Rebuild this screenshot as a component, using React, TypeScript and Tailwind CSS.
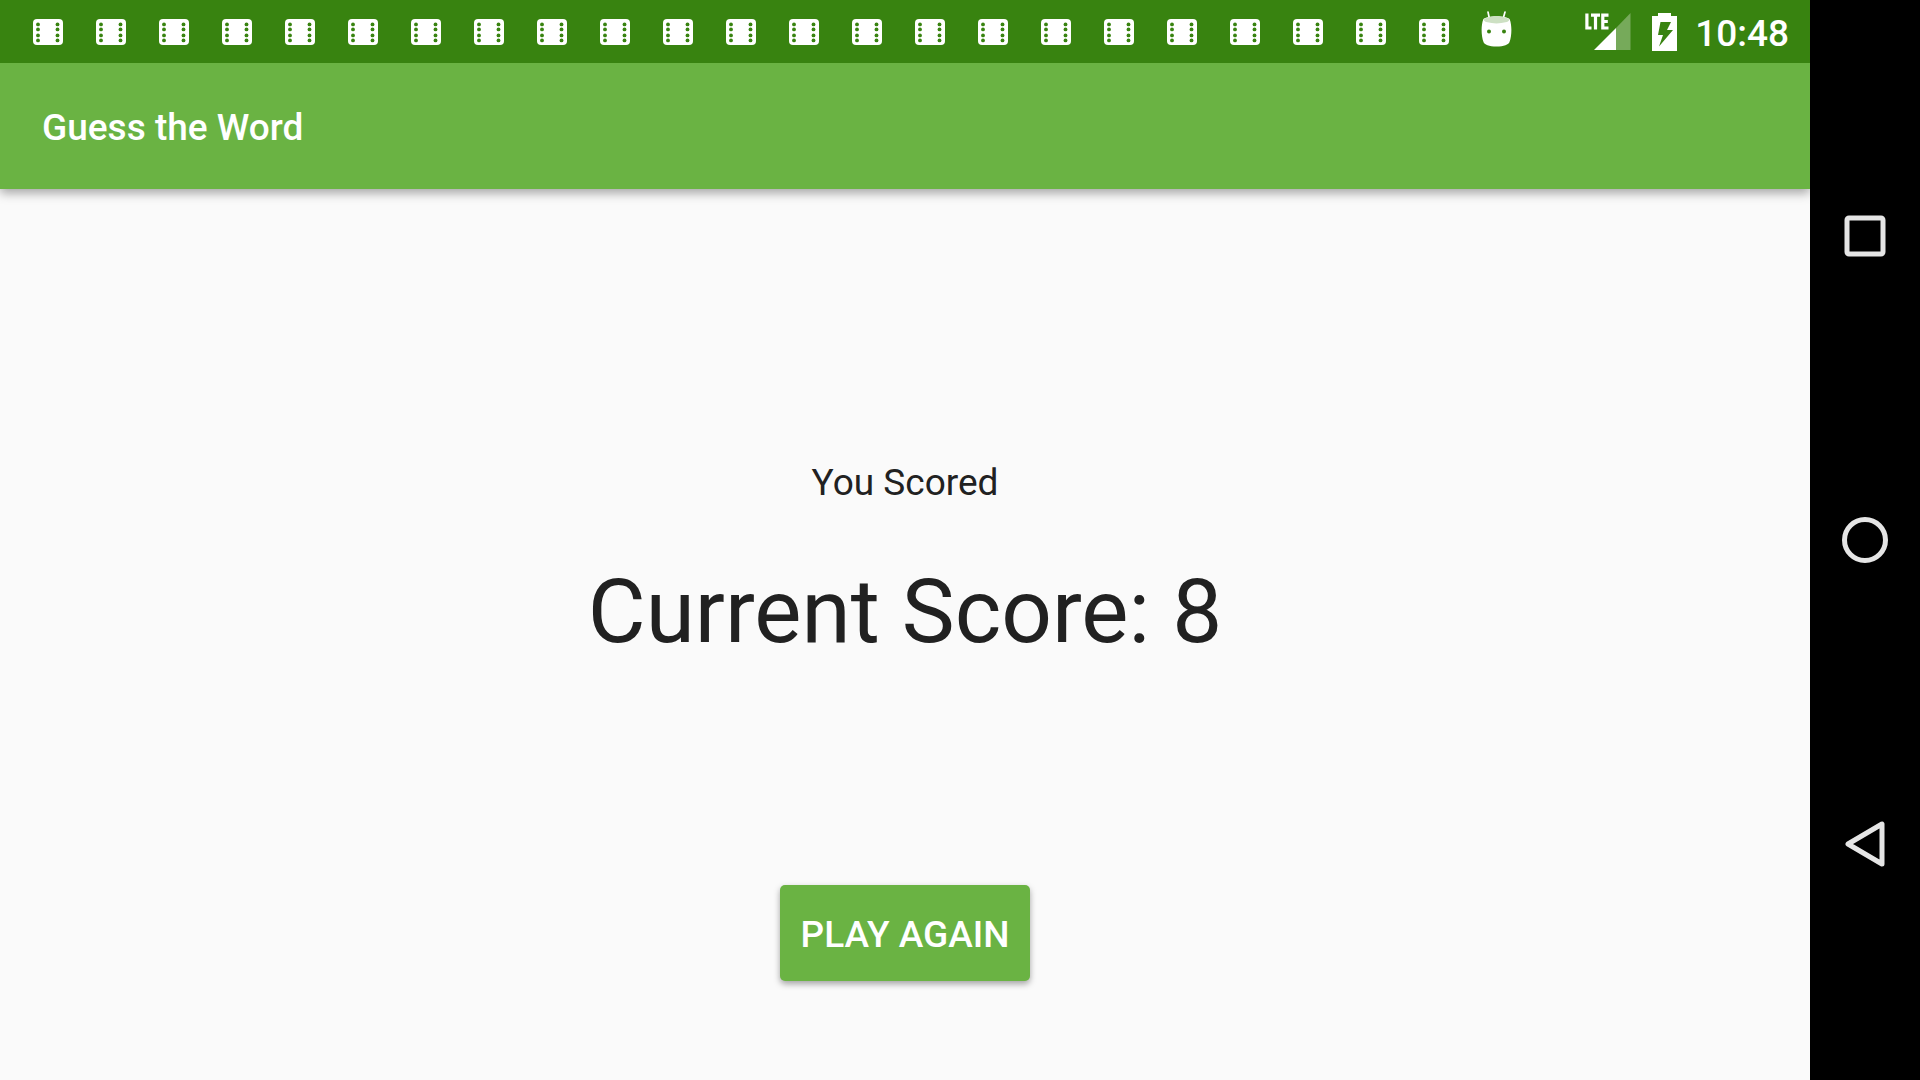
import React from "react";

const HOLES = [5, 10, 16, 21];

function FilmIcon() {
  return (
    <svg width="30" height="26" viewBox="0 0 30 26" aria-hidden="true">
      <rect width="30" height="26" rx="4" fill="#fff" />
      {HOLES.map((y) => (
        <g key={y} fill="#388310">
          <circle cx="5" cy={y + 0.4} r="1.9" />
          <circle cx="24.5" cy={y + 0.4} r="1.9" />
        </g>
      ))}
    </svg>
  );
}

function RobotIcon() {
  return (
    <svg width="32" height="36" viewBox="0 0 32 36" aria-hidden="true">
      <path d="M7 1 8.400 7.500M24 1 22.200 7.500" stroke="#fff" strokeWidth="1.7" strokeLinecap="round" />
      <path
        d="M2.200 8.500C3 6.500 8.500 5.200 15.500 5.200s12.500 1.300 13.300 3.300c2.300 6 2 17-.3 22.500-.8 2.600-5.500 4.500-13 4.500S3.300 33.600 2.500 31C.2 25.500-.1 14.500 2.200 8.500Z"
        fill="#fff"
      />
      <ellipse cx="15.500" cy="8.900" rx="12.600" ry="3.500" fill="#cde0c3" />
      <circle cx="8" cy="20.600" r="2" fill="#388310" />
      <circle cx="23" cy="20.600" r="2" fill="#388310" />
    </svg>
  );
}

function SignalIcon() {
  return (
    <span className="relative block h-[38px] w-[46px]">
      <svg className="absolute top-0 right-0" width="37" height="37" viewBox="0 0 37 37" aria-hidden="true">
        <path d="M36.500 0v37H22V15Z" fill="#76aa5a" />
        <path d="M22 15v22H0Z" fill="#fff" />
      </svg>
      <svg className="absolute top-0 left-0" width="24" height="17" viewBox="0 0 24 17" role="img" aria-label="LTE">
        <path d="M1.900 .5v14.500h4.600M6 2.100h9M10.500 2.100v14.500M23.500 2.100h-5.700v12.900h5.700M17.800 8.500h5" fill="none" stroke="#fff" strokeWidth="3.200" />
      </svg>
    </span>
  );
}

function BatteryIcon() {
  return (
    <svg width="25" height="38" viewBox="0 0 25 38" aria-hidden="true">
      <path d="M6 0h13v3h6v35H0V3h6Z" fill="#fff" />
      <path d="M8.500 9H19l-4 8h6L7 33.500l4-11.500H6Z" fill="#388310" />
    </svg>
  );
}

const NAV = [
  { label: "Overview", shape: <rect x="5" y="5" width="36" height="36" rx="2" /> },
  { label: "Home", shape: <circle cx="23" cy="23" r="20.500" /> },
  { label: "Back", shape: <path d="M40 3v40L6 23Z" /> },
];

export default function App() {
  return (
    <div className="flex min-h-screen bg-[#fafafa] font-[Roboto,sans-serif] text-[37px] leading-[44px] text-[#212121]">
      <div className="flex min-w-0 flex-1 flex-col">
        <header className="relative shadow-[0_4px_10px_rgba(0,0,0,0.35)]">
          <div className="flex h-[63px] items-center justify-between bg-[#388310] pr-[21px] pl-4 text-white">
            <div className="flex items-center">
              {Array.from({ length: 23 }, (_, i) => (
                <span key={i} className="flex w-[63px] justify-center pt-px">
                  <FilmIcon />
                </span>
              ))}
              <span className="flex w-[63px] justify-center pb-[6px]">
                <RobotIcon />
              </span>
            </div>
            <div className="flex items-center font-medium">
              <SignalIcon />
              <span className="ml-[21px]">
                <BatteryIcon />
              </span>
              <time className="ml-[18px] pt-1">10:48</time>
            </div>
          </div>
          <div className="flex h-[126px] items-center bg-[#6ab343] px-[42px] pt-1">
            <h1 className="font-medium text-white">Guess the Word</h1>
          </div>
        </header>
        <main className="flex flex-1 flex-col items-center justify-end pb-[99px]">
          <p>You Scored</p>
          <p className="mt-[55px] text-[89px] leading-[104px]">Current Score: 8</p>
          <button
            type="button"
            className="mt-[221px] h-24 rounded-[5px] bg-[#6ab343] px-[21px] pt-[3px] font-medium text-white uppercase shadow-[0_3px_6px_rgba(0,0,0,0.35)]"
          >
            Play Again
          </button>
        </main>
      </div>
      <nav aria-label="System" className="flex w-[110px] flex-col items-center justify-center gap-[258px] bg-black">
        {NAV.map(({ label, shape }) => (
          <button key={label} type="button" aria-label={label}>
            <svg width="46" height="46" viewBox="0 0 46 46" fill="none" stroke="#e5e5e5" strokeWidth="5" strokeLinejoin="round">
              {shape}
            </svg>
          </button>
        ))}
      </nav>
    </div>
  );
}
